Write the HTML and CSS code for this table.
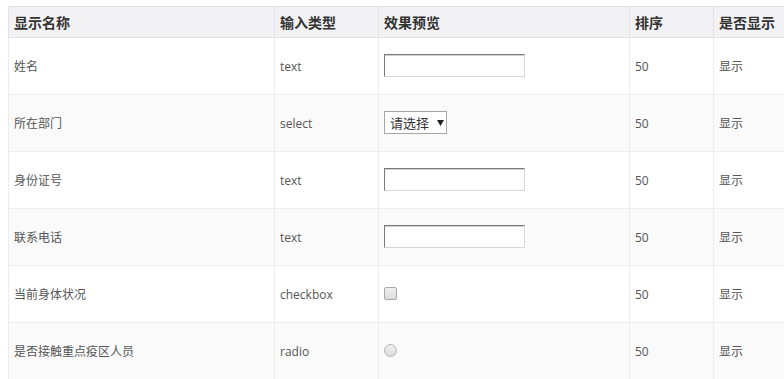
FILE: index.html
```html
<!DOCTYPE html>
<html lang="zh-CN">
<head>
<meta charset="utf-8">
<title>字段列表</title>
<link rel="stylesheet" href="styles.css">
</head>
<body>
<table class="field-table">
  <colgroup>
    <col class="c-name"><col class="c-type"><col class="c-preview"><col class="c-order"><col class="c-show">
  </colgroup>
  <thead>
    <tr><th>显示名称</th><th>输入类型</th><th>效果预览</th><th>排序</th><th>是否显示</th></tr>
  </thead>
  <tbody>
    <tr>
      <td>姓名</td><td>text</td>
      <td><input class="text-input" type="text"></td>
      <td>50</td><td>显示</td>
    </tr>
    <tr>
      <td>所在部门</td><td>select</td>
      <td><span class="fake-select">请选择<svg class="arrow" width="7" height="6" viewBox="0 0 7 6"><path d="M0 0H7L3.5 6Z" fill="#222"/></svg></span></td>
      <td>50</td><td>显示</td>
    </tr>
    <tr>
      <td>身份证号</td><td>text</td>
      <td><input class="text-input" type="text"></td>
      <td>50</td><td>显示</td>
    </tr>
    <tr>
      <td>联系电话</td><td>text</td>
      <td><input class="text-input" type="text"></td>
      <td>50</td><td>显示</td>
    </tr>
    <tr>
      <td>当前身体状况</td><td>checkbox</td>
      <td><input class="check" type="checkbox" disabled></td>
      <td>50</td><td>显示</td>
    </tr>
    <tr>
      <td>是否接触重点疫区人员</td><td>radio</td>
      <td><input class="radio" type="radio" disabled></td>
      <td>50</td><td>显示</td>
    </tr>
  </tbody>
</table>
</body>
</html>
```
FILE: styles.css
```css
html, body {
  overflow: hidden;
}
body {
  margin: 6px 0 0 8px;
  background: #fff;
  font-family: "Open Sans", "Noto Sans CJK SC", sans-serif;
  font-size: 12px;
  color: #555;
}
.field-table {
  border-collapse: collapse;
  table-layout: fixed;
  width: 900px;
}
.c-name { width: 266px; }
.c-type { width: 104px; }
.c-preview { width: 251px; }
.c-order { width: 84px; }
.c-show { width: 195px; }

.field-table th {
  height: 30px;
  padding: 0 5px;
  text-align: left;
  font-size: 14px;
  font-weight: bold;
  color: #333;
  background: #f2f2f5;
  border: 1px solid #e2e2e6;
  vertical-align: middle;
}
.field-table td {
  height: 56px;
  padding: 0 5px;
  border: 1px solid #ececec;
  vertical-align: middle;
  text-align: left;
}
.field-table tbody tr:nth-child(even) td {
  background: #fafafa;
}
.text-input {
  display: block;
  box-sizing: border-box;
  width: 141px;
  height: 23px;
  margin: -1px 0 0 0;
  padding: 0 3px;
  background: #fff;
  border-style: solid;
  border-width: 1px;
  border-color: #7a7a7a #d6d6d6 #d6d6d6 #7a7a7a;
  box-shadow: inset 0 1px 0 #d0d0d0;
}
.fake-select {
  display: inline-flex;
  align-items: center;
  box-sizing: border-box;
  width: 63px;
  height: 23px;
  padding: 0 0 0 5px;
  margin-top: -1px;
  border: 1px solid #a6a6a6;
  background: #fff;
  color: #333;
  font-size: 13px;
  vertical-align: middle;
}
.fake-select .arrow {
  margin-left: 8px;
}
.check, .radio {
  -webkit-appearance: none;
  appearance: none;
  display: block;
  box-sizing: border-box;
  width: 13px;
  height: 13px;
  margin: -2px 0 0 0;
  border: 1px solid #a9a9a9;
  background: linear-gradient(#efefef, #dcdcdc);
}
.check {
  border-radius: 2px;
}
.radio {
  border-radius: 50%;
  border-color: #b4b4b4;
}
```
